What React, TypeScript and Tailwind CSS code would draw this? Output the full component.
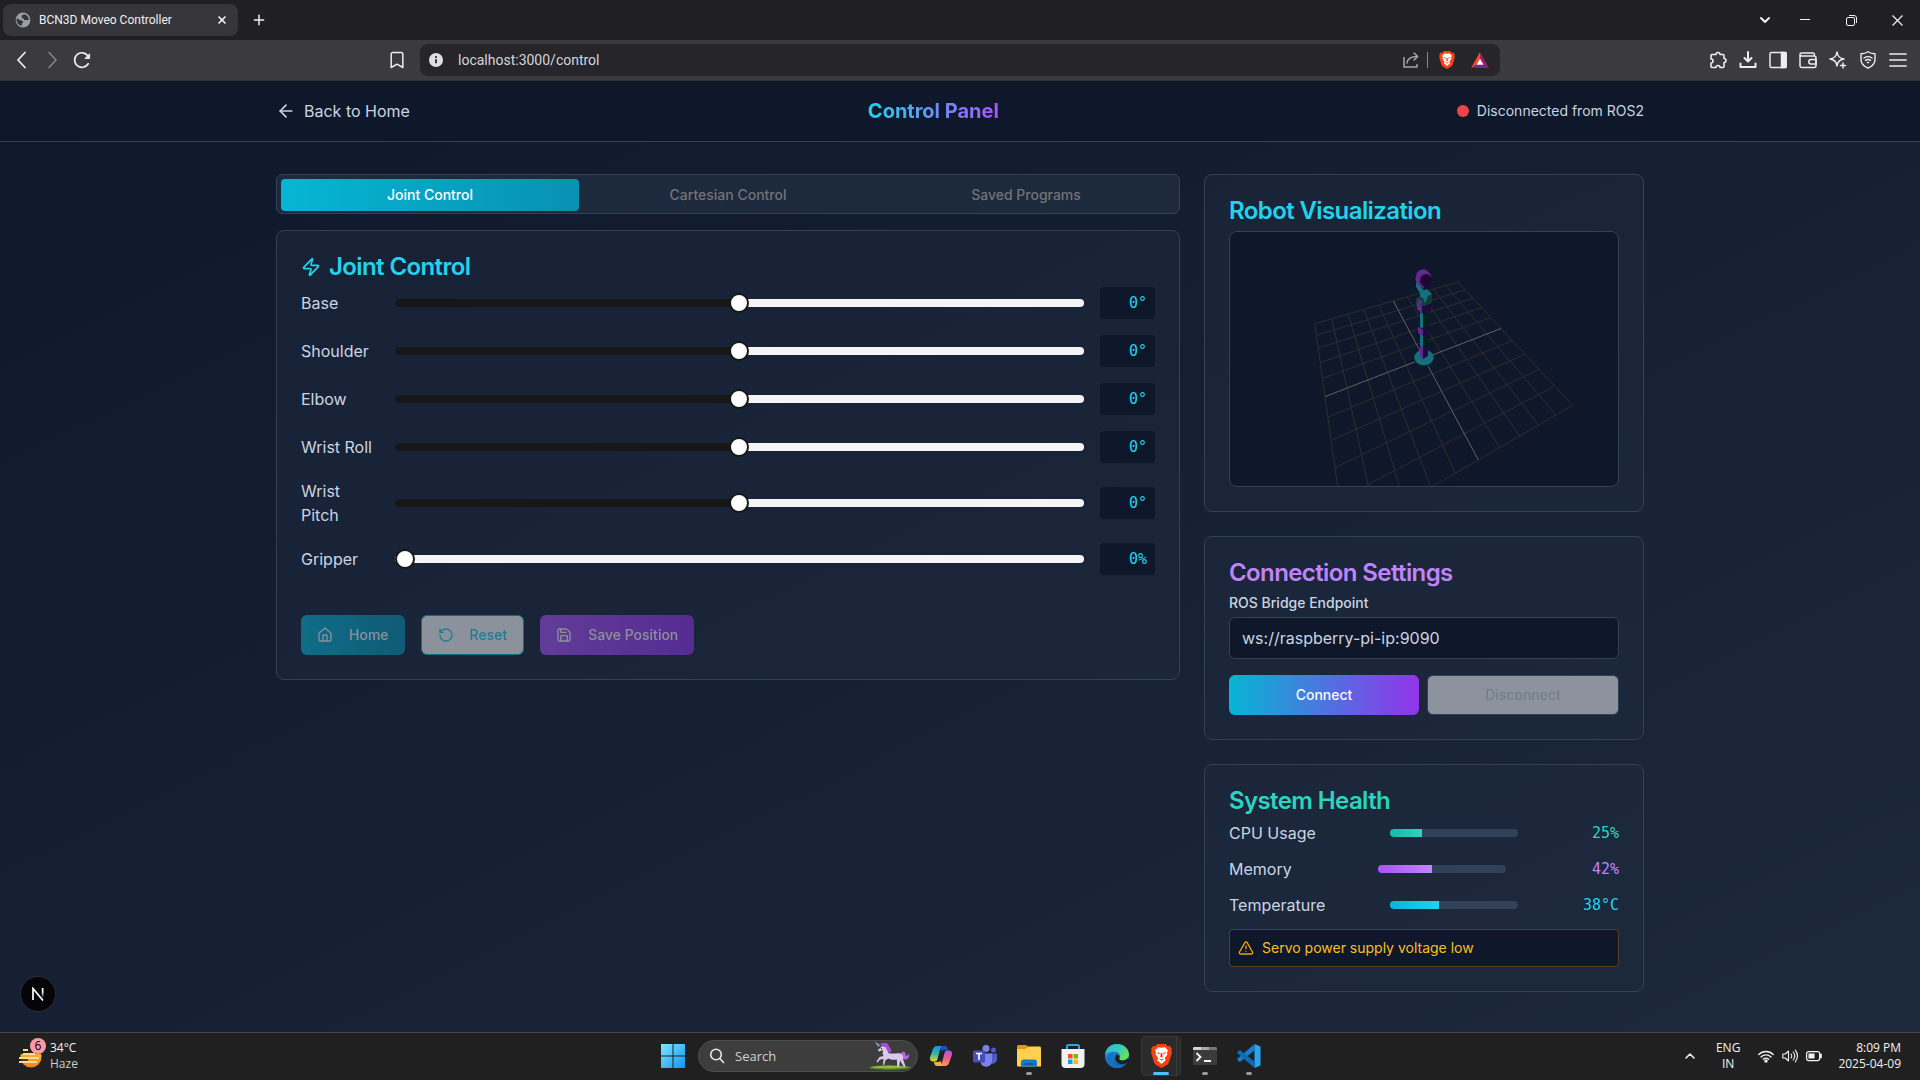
import { useState } from "react";
import type { CSSProperties, ReactNode } from "react";
import {
  ArrowLeft,
  Bookmark,
  ChevronDown,
  ChevronUp,
  House,
  Plus,
  RotateCcw,
  Save,
  TriangleAlert,
  X,
  Zap,
} from "lucide-react";

/* ---------- Browser chrome ---------- */

function Globe() {
  return (
    <svg viewBox="0 0 16 16" className="size-4 shrink-0">
      <circle cx="8" cy="8" r="7.4" fill="#9aa0a6" />
      <path
        d="M2 6.2C3.5 6.6 4 8 5.4 8c1.2 0 1.4 1 2.4 1.2.9.2.4 1.6-.5 1.9-.8.3-.6 1.5.1 2.6C4.300 13.600 1.400 11 1.600 8c0-.7.1-1.200.4-1.800zM7 3.200c1.300-.6 2.900-.9 4-.2 1.700 1.100 2.800 2.800 2.900 4.700-1 .9-1.800 0-2.900.4-1 .4-2 0-2-.9s-1.500-.5-2-1.300c-.4-.8-.6-2.300 0-2.700z"
        fill="#35353a"
      />
    </svg>
  );
}

function BraveLion({ className }: { className: string }) {
  return (
    <svg viewBox="0 0 20 23" className={className}>
      <path
        d="M6 0h8l2 2.200 2-.4 2 2.700-.6 1.700.6 1.900-2.800 9.400c-.3 1-1 1.800-1.800 2.300L10 23l-5.400-3.200c-.8-.5-1.500-1.300-1.800-2.300L0 8.100l.6-1.900L0 4.500l2-2.700 2 .4z"
        fill="#fb4014"
      />
      <path
        d="M10 3.600l3.200-.6 3 3.100-1 2.300.6 1.300-2.700 3.900.9 2-4 3.600-4-3.600.9-2-2.700-3.900.6-1.300-1-2.300 3-3.100z"
        fill="#fff"
      />
      <path
        d="M5.400 7.700l3 .9-.7 1.500zM14.600 7.700l-3 .9.7 1.500zM9.300 8.500h1.400l.5 3.600L10 13l-1.200-.9zM7.400 13.400l2.600 1.400 2.600-1.400-2.600 3z"
        fill="#fb4014"
      />
    </svg>
  );
}

function WindowButton({ label, children }: { label: string; children: ReactNode }) {
  return (
    <button type="button" aria-label={label} className="flex h-10 w-[46px] items-center justify-center">
      {children}
    </button>
  );
}

function TabStrip() {
  return (
    <div className="flex h-10 items-center bg-[#202024] pl-[3px] text-[#f0f0f2]">
      <div className="flex h-8 w-[235px] items-center rounded-lg bg-[#35353a] pl-3 pr-2">
        <Globe />
        <span className="ml-2 flex-1 whitespace-nowrap font-['Roboto','Open_Sans',sans-serif] text-xs">
          BCN3D Moveo Controller
        </span>
        <button type="button" aria-label="Close tab" className="flex size-4 items-center justify-center">
          <X className="size-3" strokeWidth={3.4} />
        </button>
      </div>
      <button type="button" aria-label="New tab" className="ml-3 flex size-[18px] items-center justify-center">
        <Plus className="size-4" strokeWidth={2.2} />
      </button>
      <div className="ml-auto flex">
        <button type="button" aria-label="Search tabs" className="mr-px flex h-10 w-8 items-center justify-center">
          <ChevronDown className="size-4" strokeWidth={3} />
        </button>
        <WindowButton label="Minimise">
          <svg viewBox="0 0 10 10" className="size-[10px]" stroke="currentColor">
            <path d="M0 4.500h10" />
          </svg>
        </WindowButton>
        <WindowButton label="Restore">
          <svg viewBox="0 0 11 11" className="size-[11px]" stroke="currentColor" fill="none">
            <rect x="0.500" y="2.500" width="8" height="8" rx="1.500" />
            <path d="M3 .5h5a2.500 2.500 0 012.500 2.500v5" />
          </svg>
        </WindowButton>
        <WindowButton label="Close">
          <svg viewBox="0 0 11 11" className="size-[11px]" stroke="currentColor" strokeWidth="1.200">
            <path d="M.5.5l10 10M10.500.5l-10 10" />
          </svg>
        </WindowButton>
      </div>
    </div>
  );
}

function ToolButton({ label, children }: { label: string; children: ReactNode }) {
  return (
    <button type="button" aria-label={label} className="flex h-8 w-[30px] items-center justify-center">
      {children}
    </button>
  );
}

const stroke18 = {
  viewBox: "0 0 18 18",
  className: "size-[18px]",
  fill: "none",
  stroke: "currentColor",
  strokeWidth: 1.5,
  strokeLinecap: "round" as const,
  strokeLinejoin: "round" as const,
};

function Toolbar() {
  return (
    <div className="grid h-[41px] grid-cols-[420fr_1080fr_420fr] items-center border-b border-[#2f2f34] bg-[#3b3b3f] text-[#ededf0]">
      <div className="flex items-center pl-[7px] pr-2">
        <ToolButton label="Back">
          <svg {...stroke18} strokeWidth={1.8}>
            <path d="M12 1.500L5 9l7 7.500" />
          </svg>
        </ToolButton>
        <ToolButton label="Forward">
          <svg {...stroke18} stroke="#86868b">
            <path d="M6 1.500L13 9l-7 7.500" />
          </svg>
        </ToolButton>
        <ToolButton label="Reload">
          <svg {...stroke18} strokeWidth={1.700}>
            <path d="M15.200 12.800A7.300 7.300 0 1115 5" />
            <path d="M16.600 3.200v4.200h-4.200z" fill="currentColor" strokeWidth={1} />
          </svg>
        </ToolButton>
        <button type="button" aria-label="Bookmark this page" className="ml-auto flex h-8 w-[30px] items-center justify-center">
          <Bookmark className="size-5" strokeWidth={1.8} />
        </button>
      </div>
      <div className="flex h-8 items-center rounded-lg bg-[#25252a] pl-[9px] pr-[9px]">
        <svg viewBox="0 0 14 14" className="size-[14px] shrink-0">
          <circle cx="7" cy="7" r="7" fill="#dedee3" />
          <path d="M7 6.200v4" stroke="#25252a" strokeWidth="1.800" />
          <circle cx="7" cy="4" r="1.100" fill="#25252a" />
        </svg>
        <input
          aria-label="Address"
          defaultValue="localhost:3000/control"
          className="ml-[15px] min-w-0 flex-1 bg-transparent font-['Roboto','Open_Sans',sans-serif] text-sm text-[#d5d5da] outline-none"
        />
        <button type="button" aria-label="Share" className="text-[#a5a5aa]">
          <svg {...stroke18}>
            <path d="M2 6.500v9.500h13v-2.500" />
            <path d="M5 12c.5-4.500 3.500-6.500 10.500-6.500M12 2l3.700 3.500L12 9" />
          </svg>
        </button>
        <span className="mx-[7px] h-4 w-px bg-[#8a8a8f]" />
        <button type="button" aria-label="Brave Shields" className="ml-1">
          <BraveLion className="h-[18px] w-4" />
        </button>
        <button type="button" aria-label="Brave Rewards" className="ml-4 mr-[2px]">
          <svg viewBox="0 0 18 16" className="h-4 w-[18px]">
            <path d="M9 0L0 16l5.500-3.200L9 6.500z" fill="#ff4724" />
            <path d="M9 0l9 16-5.500-3.200L9 6.500z" fill="#9e1f63" />
            <path d="M0 16h18l-5.500-3.200h-7z" fill="#662d91" />
            <path d="M9 6.500l3.500 6.300h-7z" fill="#fff" />
          </svg>
        </button>
      </div>
      <div className="flex items-center justify-end pr-[7px]">
        <ToolButton label="Extensions">
          <svg {...stroke18} strokeWidth={1.600}>
            <path d="M7 3.500a2 2 0 014 0h3a1 1 0 011 1v3a2 2 0 010 4V15.500a1 1 0 01-1 1h-3a2 2 0 00-4 0H3a1 1 0 01-1-1v-3.500a2 2 0 000-4V4.500a1 1 0 011-1z" />
          </svg>
        </ToolButton>
        <ToolButton label="Downloads">
          <svg {...stroke18} strokeWidth={2}>
            <path d="M9 1v9M5.500 7L9 10.500 12.500 7M1.500 12.500V16h15v-3.500" />
          </svg>
        </ToolButton>
        <ToolButton label="Sidebar">
          <svg {...stroke18}>
            <rect x="1" y="1.500" width="16" height="15" rx="1.500" />
            <path d="M12.500 1.500H17v15h-4.500z" fill="currentColor" />
          </svg>
        </ToolButton>
        <ToolButton label="Wallet">
          <svg {...stroke18}>
            <path d="M1 4v10.500a2 2 0 002 2h12a2 2 0 002-2V7a2 2 0 00-2-2H2.500a1.500 1.500 0 010-3H14a1.500 1.500 0 011.500 1.500V5" />
            <path d="M17 8.500h-5a2 2 0 000 4.500h5z" />
          </svg>
        </ToolButton>
        <ToolButton label="Leo AI">
          <svg {...stroke18}>
            <path d="M8 1c.6 4.500 2.500 6.400 7 7-4.500.6-6.400 2.500-7 7-.6-4.500-2.500-6.400-7-7 4.500-.6 6.400-2.500 7-7zM14 12v5M11.500 14.500h5" />
          </svg>
        </ToolButton>
        <ToolButton label="VPN">
          <svg {...stroke18} strokeWidth={1.400}>
            <path d="M9 .8c2 1.400 4.500 2 7 2v6c0 4-3.500 6.800-7 8.400-3.500-1.600-7-4.400-7-8.400v-6c2.500 0 5-.6 7-2z" />
            <path d="M5 7c2.500-1.700 5.500-1.700 8 0M6.500 9.300c1.500-1 3.500-1 5 0M8.400 11.500h1.200" />
          </svg>
        </ToolButton>
        <ToolButton label="Menu">
          <svg {...stroke18} strokeWidth={1.700}>
            <path d="M1 3h16M1 9h16M1 15h16" />
          </svg>
        </ToolButton>
      </div>
    </div>
  );
}

/* ---------- Control page ---------- */

function Header() {
  return (
    <header className="border-b border-slate-700 bg-slate-900">
      <div className="mx-auto flex max-w-[1400px] items-center justify-between px-4 py-4">
        <a href="#home" className="flex items-center gap-2 text-slate-300">
          <ArrowLeft className="size-5" />
          Back to Home
        </a>
        <h1 className="bg-linear-to-r/srgb from-[#22d3ee] to-[#a855f7] bg-clip-text text-xl font-bold text-transparent">
          Control Panel
        </h1>
        <div className="flex items-center gap-2 text-sm text-slate-300">
          <span className="size-3 rounded-full bg-[#ef4444]" />
          Disconnected from ROS2
        </div>
      </div>
    </header>
  );
}

function Panel({ children }: { children: ReactNode }) {
  return <section className="rounded-lg border border-slate-700 bg-slate-800/50 p-6">{children}</section>;
}

type Joint = { id: string; label: string; min: number; max: number; unit: string };

const JOINTS: Joint[] = [
  { id: "base", label: "Base", min: -180, max: 180, unit: "°" },
  { id: "shoulder", label: "Shoulder", min: -90, max: 90, unit: "°" },
  { id: "elbow", label: "Elbow", min: -90, max: 90, unit: "°" },
  { id: "wrist-roll", label: "Wrist Roll", min: -180, max: 180, unit: "°" },
  { id: "wrist-pitch", label: "Wrist Pitch", min: -90, max: 90, unit: "°" },
  { id: "gripper", label: "Gripper", min: 0, max: 100, unit: "%" },
];

function JointRow({ joint }: { joint: Joint }) {
  const [value, setValue] = useState(0);
  const percent = ((value - joint.min) / (joint.max - joint.min)) * 100;
  const fill: CSSProperties = {
    backgroundImage: `linear-gradient(to right, #171717 ${percent}%, #f5f5f5 ${percent}%)`,
  };
  return (
    <div className="flex items-center gap-4">
      <label htmlFor={joint.id} className="w-24 text-slate-300">
        {joint.label}
      </label>
      <input
        id={joint.id}
        type="range"
        min={joint.min}
        max={joint.max}
        value={value}
        onChange={(e) => setValue(Number(e.target.value))}
        style={fill}
        className="h-2 w-full appearance-none rounded-full [&::-webkit-slider-thumb]:size-5 [&::-webkit-slider-thumb]:appearance-none [&::-webkit-slider-thumb]:rounded-full [&::-webkit-slider-thumb]:border-2 [&::-webkit-slider-thumb]:border-neutral-900 [&::-webkit-slider-thumb]:bg-white"
      />
      <output
        htmlFor={joint.id}
        className="w-16 rounded bg-slate-900 px-2 py-1 text-right font-['DejaVu_Sans_Mono',monospace] text-[15px]/6 text-[#22d3ee]"
      >
        {value}
        {joint.unit}
      </output>
    </div>
  );
}

const TABS = ["Joint Control", "Cartesian Control", "Saved Programs"];

function JointControl() {
  return (
    <div className="lg:col-span-2">
      <div role="tablist" className="grid h-10 grid-cols-3 rounded-md border border-slate-700 bg-slate-800 p-1">
        {TABS.map((tab, i) => (
          <button
            key={tab}
            type="button"
            role="tab"
            aria-selected={i === 0}
            className="h-8 rounded-sm text-sm font-medium text-neutral-500 aria-selected:bg-linear-to-r/srgb aria-selected:from-[#06b6d4] aria-selected:to-[#0891b2] aria-selected:text-white"
          >
            {tab}
          </button>
        ))}
      </div>
      <div className="mt-4">
        <Panel>
          <h2 className="mb-2 flex items-center gap-2 text-2xl/6 font-semibold tracking-tight text-[#22d3ee]">
            <Zap className="size-5" />
            Joint Control
          </h2>
          <div className="flex flex-col gap-4">
            {JOINTS.map((joint) => (
              <JointRow key={joint.id} joint={joint} />
            ))}
          </div>
          <div className="mt-10 flex gap-4 text-sm font-medium">
            <button
              type="button"
              disabled
              className="flex h-10 items-center gap-4 rounded-md bg-linear-to-r/srgb from-[#06b6d4] to-[#0891b2] px-4 text-neutral-50 opacity-50"
            >
              <House className="size-4" />
              Home
            </button>
            <button
              type="button"
              disabled
              className="flex h-10 items-center gap-4 rounded-md border border-[#06b6d4] bg-white px-4 text-[#22d3ee] opacity-50"
            >
              <RotateCcw className="size-4" />
              Reset
            </button>
            <button
              type="button"
              disabled
              className="flex h-10 items-center gap-4 rounded-md bg-linear-to-r/srgb from-[#a855f7] to-[#9333ea] px-4 text-neutral-50 opacity-50"
            >
              <Save className="size-4" />
              Save Position
            </button>
          </div>
        </Panel>
      </div>
    </div>
  );
}

/* Projects a floor point (u, v in -1..1) onto the viewport. */
function project(u: number, v: number): string {
  const w = 0.125 * u - 0.2776 * v + 1;
  const x = (110.9 * u - 14.6 * v + 194) / w;
  const y = (-17.7 * u + 38.3 * v + 126.3) / w;
  return `${x.toFixed(1)} ${y.toFixed(1)}`;
}

function floorLines(steps: number[]): string {
  return steps
    .map((t) => `M${project(t, -1)}L${project(t, 1)}M${project(-1, t)}L${project(1, t)}`)
    .join("");
}

const OUTER_STEPS = [-1, -0.8, -0.6, -0.4, -0.2, 0.2, 0.4, 0.6, 0.8, 1];

function RobotScene() {
  return (
    <svg
      viewBox="0 0 388 254"
      className="h-full w-full"
      preserveAspectRatio="xMidYMid slice"
      role="img"
      aria-label="Robot arm on a grid floor"
    >
      <path d={floorLines(OUTER_STEPS)} stroke="#302d2b" fill="none" />
      <path d={floorLines([0])} stroke="#626264" fill="none" />
      <ellipse cx="194" cy="127" rx="9.700" ry="7.800" fill="#04262a" />
      <ellipse cx="194" cy="125.500" rx="9.700" ry="7.800" fill="#156f7c" />
      <path d="M190 101l4 2v13l-4-2z" fill="#156f7c" />
      <path d="M193 102l5-1.500v14l-5 2z" fill="#03201f" />
      <path d="M190 113l4 2v12l-4-2.500z" fill="#5d2a8c" />
      <path d="M193 115.500l5-1.500v10l-5 3z" fill="#220840" />
      <path d="M190 80l4 2v15l-4-2z" fill="#156f7c" />
      <path d="M193 80l6-1.500V97l-6 2z" fill="#03201f" />
      <path d="M188 94.500l5 3.500v6l-5-3z" fill="#5d2a8c" />
      <path d="M193 98l7-2v6l-7 2.500z" fill="#220840" />
      <path d="M186 66l8-2 7 2v8h-15z" fill="#0d403b" />
      <path d="M187 70l5 4v7l-5-3.500z" fill="#5d2a8c" />
      <path d="M192 74.500l9-3v7l-9 2.500z" fill="#220840" />
      <path d="M188 67l4 2v4l-4-2z" fill="#5d2a8c" />
      <path d="M186 50l4 3 4 6-3 4-5-8z" fill="#156f7c" />
      <path d="M190 60l7-3 5 5-3 5-2 0-2 4-2-5-3-1z" fill="#156f7c" />
      <path d="M198 64l4-2v9l-4 1-2-3z" fill="#0a3d38" />
      <path d="M186 44.500a7 7 0 0112-5l3.500 4.500-8 12-6-4a8 8 0 01-1.500-7.500z" fill="#5f2b90" />
      <ellipse cx="196" cy="48.500" rx="6" ry="6.500" fill="#1f0633" />
    </svg>
  );
}

const METRICS = [
  {
    label: "CPU Usage",
    percent: 25,
    text: "25%",
    tone: "text-[#2dd4bf]",
    bar: "bg-linear-to-r/srgb from-[#14b8a6] to-[#2dd4bf]",
  },
  {
    label: "Memory",
    percent: 42,
    text: "42%",
    tone: "text-[#c084fc]",
    bar: "bg-linear-to-r/srgb from-[#a855f7] to-[#c084fc]",
  },
  {
    label: "Temperature",
    percent: 38,
    text: "38°C",
    tone: "text-[#22d3ee]",
    bar: "bg-linear-to-r/srgb from-[#06b6d4] to-[#22d3ee]",
  },
];

function Sidebar() {
  return (
    <div className="flex flex-col gap-6">
      <Panel>
        <h2 className="mb-2 text-2xl/6 font-semibold tracking-tight text-[#22d3ee]">Robot Visualization</h2>
        <div className="h-64 overflow-hidden rounded-lg border border-slate-700 bg-slate-900">
          <RobotScene />
        </div>
      </Panel>
      <Panel>
        <h2 className="mb-2 text-2xl/6 font-semibold tracking-tight text-[#c084fc]">Connection Settings</h2>
        <label htmlFor="endpoint" className="mb-1 block text-sm font-medium text-slate-300">
          ROS Bridge Endpoint
        </label>
        <input
          id="endpoint"
          type="text"
          defaultValue="ws://raspberry-pi-ip:9090"
          className="w-full rounded-md border border-slate-700 bg-slate-900 px-3 py-2 text-slate-300 outline-none"
        />
        <div className="mt-4 flex gap-2 text-sm font-medium">
          <button
            type="button"
            className="h-10 flex-1 rounded-md bg-linear-to-r/srgb from-[#06b6d4] to-[#9333ea] text-neutral-50"
          >
            Connect
          </button>
          <button
            type="button"
            disabled
            className="h-10 flex-1 rounded-md border border-slate-600 bg-white text-slate-300 opacity-50"
          >
            Disconnect
          </button>
        </div>
      </Panel>
      <Panel>
        <h2 className="mb-2 text-2xl/6 font-semibold tracking-tight text-[#2dd4bf]">System Health</h2>
        <div className="flex flex-col gap-3">
          {METRICS.map((m) => (
            <div key={m.label} className="flex items-center justify-between">
              <span className="text-slate-300">{m.label}</span>
              <div
                role="progressbar"
                aria-label={m.label}
                aria-valuenow={m.percent}
                className="h-2 w-32 overflow-hidden rounded-full bg-slate-700"
              >
                <div className={`h-full ${m.bar}`} style={{ width: `${m.percent}%` }} />
              </div>
              <span className={`font-['DejaVu_Sans_Mono',monospace] text-[15px]/6 ${m.tone}`}>{m.text}</span>
            </div>
          ))}
          <div
            role="alert"
            className="flex items-center gap-2 rounded border border-[#f59e0b]/30 bg-slate-900 p-2 text-sm text-[#fbbf24]"
          >
            <TriangleAlert className="size-4 text-[#f59e0b]" />
            Servo power supply voltage low
          </div>
        </div>
      </Panel>
    </div>
  );
}

function DevBadge() {
  return (
    <button
      type="button"
      aria-label="Open Next.js developer tools"
      className="absolute bottom-5 left-5 flex size-9 items-center justify-center rounded-full border border-[#2c2c30] bg-[#050507]"
    >
      <svg viewBox="0 0 14 14" className="size-[14px]" fill="none" strokeWidth="1.700">
        <defs>
          <linearGradient id="stem" x1="0" y1="0" x2="0" y2="1">
            <stop offset="0.400" stopColor="#fff" />
            <stop offset="1" stopColor="#fff" stopOpacity="0" />
          </linearGradient>
        </defs>
        <path d="M2 13V1.500L12 13.500" stroke="#fff" />
        <rect x="10.800" y="1" width="1.700" height="10" fill="url(#stem)" />
      </svg>
    </button>
  );
}

/* ---------- Windows taskbar ---------- */

function TaskIcon({
  label,
  state = "closed",
  children,
}: {
  label: string;
  state?: "closed" | "open" | "active";
  children: ReactNode;
}) {
  return (
    <button
      type="button"
      aria-label={label}
      data-state={state}
      className="relative mx-[2px] flex h-10 w-10 items-center justify-center rounded data-[state=active]:border data-[state=active]:border-[#343434] data-[state=active]:bg-[#2b2b2b]"
    >
      {children}
      {state === "open" && <span className="absolute bottom-px h-[3px] w-[6px] rounded-full bg-[#9a9a9a]" />}
      {state === "active" && (
        <>
          <span className="absolute inset-y-0 right-[3px] w-px bg-[#3c3c3c]" />
          <span className="absolute bottom-0 h-[3px] w-4 rounded-full bg-[#4cc2ff]" />
        </>
      )}
    </button>
  );
}

function Unicorn() {
  return (
    <svg viewBox="0 0 42 32" className="h-8 w-[42px]">
      <ellipse cx="21" cy="27.500" rx="20.500" ry="2.200" fill="#5f8f2c" />
      <ellipse cx="20" cy="27" rx="17" ry="1.200" fill="#8fbf3a" />
      <path d="M33 12c3-1 4 1.500 3.500 3.500 1 .8 2.500 0 3.500-2 .6 4-1.500 6.500-4.500 6-2.500-.5-3-3-4.500-3.500z" fill="#b565e0" />
      <path
        d="M9 10l4-4 4 1 2.500 6c4 1.500 8.500-.5 12 .5 2.500 1 3 3.500 2.500 5.500l2.500 7.500-1.500.5-4-6.500-1 6.500h-1.700l-.5-7.500c-3 .5-6 .3-8.500-1l-3 2-1 4.500-1.300-.5.5-5.500-3.500.5-2.500 3-1-1 3-4.500 4-1c-1-2-1-3.500-.5-6l-4.500 1.500z"
        fill="#dcc8ec"
      />
      <path d="M11 5c2-3 8-3 9 1 1 3 3 2.500 2 6-1 1-3 0-4-2s-1-3.500-4-4z" fill="#a14fd6" />
      <path d="M9.500 7L5.500 1.500 11 5z" fill="#6fb3e8" />
      <circle cx="12.500" cy="8.500" r=".7" fill="#3a2150" />
    </svg>
  );
}

function Taskbar() {
  return (
    <footer className="grid h-12 grid-cols-[1fr_auto_1fr] items-center border-t border-[#454545] bg-[#202020] pb-px font-['Open_Sans',sans-serif] text-xs/4 text-[#f2f2f2]">
      <button type="button" className="flex items-center gap-2 justify-self-start pl-[18px] text-left">
        <span className="relative block h-8 w-6">
          <svg viewBox="0 0 24 24" className="mt-1 size-6">
            <defs>
              <linearGradient id="sun" x1="0" y1="0" x2="0" y2="1">
                <stop offset="0" stopColor="#ffc93c" />
                <stop offset="1" stopColor="#f0821a" />
              </linearGradient>
              <clipPath id="lowSun">
                <path d="M0 10h24v14H0z" />
              </clipPath>
            </defs>
            <circle cx="13" cy="13" r="10.500" fill="url(#sun)" clipPath="url(#lowSun)" />
            <path d="M5 6h5M5 10h12M1 14h20M1 18h18" stroke="#f3dd94" strokeWidth="1.800" />
            <path d="M0 16h10M0 20h4" stroke="#202020" strokeWidth="1.400" />
          </svg>
          <span className="absolute -top-[2px] left-3 flex size-4 items-center justify-center rounded-full bg-[#ff99a4] text-black">
            6
          </span>
        </span>
        <span>
          <span className="block">34°C</span>
          <span className="block text-[#cfcfcf]">Haze</span>
        </span>
      </button>

      <div className="flex items-center pl-[2px]">
        <TaskIcon label="Start">
          <svg viewBox="0 0 24 24" className="size-6">
            <defs>
              <linearGradient id="win" x1="0" y1="0" x2="1" y2="1">
                <stop offset="0" stopColor="#7fe6ff" />
                <stop offset="1" stopColor="#1094f0" />
              </linearGradient>
            </defs>
            <path d="M0 0h11.500v11.500H0zM12.500 0H24v11.500H12.500zM0 12.500h11.500V24H0zM12.500 12.500H24V24H12.500z" fill="url(#win)" />
          </svg>
        </TaskIcon>
        <label className="ml-[3px] mr-px flex h-8 w-[220px] items-center rounded-full border border-[#4e4e4e] bg-[#3d3d3d] pl-[10px] pr-[6px]">
          <svg viewBox="0 0 16 16" className="size-4 shrink-0" fill="none" stroke="#e6e6e6" strokeWidth="1.600">
            <circle cx="7" cy="6.500" r="5.300" />
            <path d="M10.800 10.500L15 15" />
          </svg>
          <input
            aria-label="Search"
            placeholder="Search"
            className="ml-[10px] w-20 min-w-0 flex-1 bg-transparent text-[13px] outline-none placeholder:text-[#d0d0d0]"
          />
          <Unicorn />
        </label>
        <TaskIcon label="Copilot">
          <svg viewBox="0 0 24 24" className="size-6">
            <defs>
              <linearGradient id="cpA" x1="0" y1="0" x2="0" y2="1">
                <stop offset="0" stopColor="#1a8fe6" />
                <stop offset="0.500" stopColor="#2fb8a0" />
                <stop offset="1" stopColor="#f2d021" />
              </linearGradient>
              <linearGradient id="cpB" x1="0" y1="0" x2="0" y2="1">
                <stop offset="0" stopColor="#a35cf0" />
                <stop offset="0.500" stopColor="#ee5a8c" />
                <stop offset="1" stopColor="#ff9a4d" />
              </linearGradient>
            </defs>
            <path d="M16 2c2 0 2.500 1.500 3 4h-4c-1 0-1.700.5-2 1.500L10 2z" fill="#1b4fc4" />
            <path d="M8 2h5.500c-1.500.5-2 1.500-2.500 3.500L8.500 15c-.5 1.700-1 2.500-2.500 2.500H4.500c-3 0-4-2-3.300-5L4 5c.7-2 2-3 4-3z" fill="url(#cpA)" />
            <path d="M8 22c-2 0-2.500-1.500-3-4h4c1 0 1.700-.5 2-1.500L14 22z" fill="#f5b04a" />
            <path d="M16 22h-5.500c1.500-.5 2-1.500 2.500-3.500L15.500 9c.5-1.700 1-2.500 2.500-2.500h1.500c3 0 4 2 3.300 5L20 19c-.7 2-2 3-4 3z" fill="url(#cpB)" />
          </svg>
        </TaskIcon>
        <TaskIcon label="Microsoft Teams">
          <svg viewBox="0 0 24 24" className="size-6">
            <circle cx="20.500" cy="6" r="2.500" fill="#5059c9" />
            <circle cx="13" cy="4.500" r="3.500" fill="#7b83eb" />
            <path d="M17 9.500h7v6a4.500 4.500 0 01-7 3.500z" fill="#5059c9" />
            <path d="M8 9.500h11v7a6 6 0 01-11 3.500z" fill="#7b83eb" />
            <rect x="0" y="6.500" width="12" height="12" rx="1.200" fill="#464eb8" />
            <path d="M3 9.500h6M6 9.500v6.500" stroke="#fff" strokeWidth="1.600" />
          </svg>
        </TaskIcon>
        <TaskIcon label="File Explorer" state="open">
          <svg viewBox="0 0 24 22" className="h-[22px] w-6">
            <path d="M0 1.500C0 .7.7 0 1.500 0H9l2 1.500L9 4H0z" fill="#e09a12" />
            <path d="M0 4h8.500L11 1.500h11.500c.8 0 1.500.7 1.500 1.500v18.500H1A1 1 0 010 20.500z" fill="#ffd04f" />
            <path d="M4 21.500V17c0-1.500 1-2.500 2.500-2.500h11c1.500 0 2.500 1 2.500 2.500v4.500z" fill="#1579cc" />
            <path d="M7.500 18h9v2h-9z" fill="#0d5ba3" />
          </svg>
        </TaskIcon>
        <TaskIcon label="Microsoft Store">
          <svg viewBox="0 0 24 24" className="size-6">
            <path d="M6 6V2.500C6 1.700 6.700 1 7.500 1h9c.8 0 1.500.7 1.500 1.500V6" stroke="#2aa7e8" strokeWidth="2" fill="none" />
            <path d="M.5 5h23v15a4 4 0 01-4 4h-15a4 4 0 01-4-4z" fill="#f1f1f1" />
            <path d="M7 10h4.500v4.500H7z" fill="#f25022" />
            <path d="M12.500 10H17v4.500h-4.500z" fill="#7fba00" />
            <path d="M7 15.500h4.500V20H7z" fill="#00a4ef" />
            <path d="M12.500 15.500H17V20h-4.500z" fill="#ffb900" />
          </svg>
        </TaskIcon>
        <TaskIcon label="Microsoft Edge">
          <svg viewBox="0 0 24 24" className="size-6">
            <defs>
              <linearGradient id="edA" x1="0" y1="0" x2="1" y2="0.500">
                <stop offset="0" stopColor="#2cb4ea" />
                <stop offset="0.600" stopColor="#38cdb8" />
                <stop offset="1" stopColor="#66e05a" />
              </linearGradient>
              <linearGradient id="edB" x1="0" y1="0" x2="1" y2="1">
                <stop offset="0" stopColor="#1f9ae0" />
                <stop offset="1" stopColor="#0f4f9e" />
              </linearGradient>
            </defs>
            <circle cx="12" cy="12" r="12" fill="url(#edB)" />
            <path d="M0 11C.5 4.500 5.500 0 12 0c7 0 12 5 12 10.500 0 3.500-2.700 6-6.200 6-2.800 0-4.300-1.200-3.300-2.700 1.500-2.300-.5-6-4.800-6C5 7.800 1 9 0 11z" fill="url(#edA)" />
            <path d="M14.500 13.800c-1 1.500.5 2.700 3.300 2.700 2.200 0 4-.9 5-2.500l1.200 3.500-1.500 1c-2.500 1.800-6 2.200-8.500 1-4-1.800-5-6.500-2.500-9 2.500.3 3.700 1.900 3 3.300z" fill="#202020" />
            <path d="M9 9.500c-3 2.500-3 8 .5 11 3.500 2.500 9 1.700 12.500-2-2 3.500-5.500 5.500-10 5.500C5 24 1.500 18.500 1.500 14c1-3.500 4-5 7.500-4.500z" fill="#1a6fc0" />
          </svg>
        </TaskIcon>
        <TaskIcon label="Brave" state="active">
          <BraveLion className="h-6 w-[21px]" />
        </TaskIcon>
        <TaskIcon label="Terminal" state="open">
          <svg viewBox="0 0 24 18" className="h-[18px] w-6">
            <rect width="24" height="18" rx="1.500" fill="#3b3b3b" />
            <path d="M0 1.500C0 .7.700 0 1.500 0H8v3H0z" fill="#d6d6d6" />
            <path d="M8 0h8v3H8z" fill="#a8a8a8" />
            <path d="M16 0h6.500c.8 0 1.500.7 1.500 1.500V3h-8z" fill="#777" />
            <path d="M3.500 6l4 4-4 4M11 14h7" stroke="#f4f4f4" strokeWidth="1.900" fill="none" />
          </svg>
        </TaskIcon>
        <TaskIcon label="Visual Studio Code" state="open">
          <svg viewBox="0 0 24 24" className="size-6">
            <path d="M17.500 0l6 2.500v19l-6 2.500z" fill="#2aa3f0" />
            <path d="M17.500 0v6.500L3.500 17.500c-.5.400-1 .4-1.500 0L.7 16.300c-.7-.6-.7-1.300 0-1.900z" fill="#0f7fce" />
            <path d="M17.500 24v-6.500L3.500 6.500c-.5-.4-1-.4-1.500 0L.7 7.700c-.7.6-.7 1.300 0 1.900z" fill="#0a6cb8" />
          </svg>
        </TaskIcon>
      </div>

      <div className="flex items-center justify-self-end pr-[19px]">
        <button type="button" aria-label="Show hidden icons" className="mr-[18px]">
          <ChevronUp className="size-4" strokeWidth={2.400} />
        </button>
        <button type="button" className="mr-[18px] text-center">
          <span className="block">ENG</span>
          <span className="block">IN</span>
        </button>
        <button type="button" aria-label="Network, volume and battery" className="mr-4 flex items-center gap-2">
          <svg viewBox="0 0 16 16" className="size-4" fill="none" stroke="currentColor" strokeWidth="1.300" strokeLinecap="round">
            <path d="M.8 6.500c4-4 10.400-4 14.400 0M3 9c2.800-2.800 7.200-2.800 10 0M5.300 11.300c1.500-1.500 3.900-1.500 5.400 0" />
            <circle cx="8" cy="13" r="1.100" fill="currentColor" />
          </svg>
          <svg viewBox="0 0 16 16" className="size-4" fill="none" stroke="currentColor" strokeWidth="1.100" strokeLinecap="round" strokeLinejoin="round">
            <path d="M.8 6v4h2.400l3.300 3V3L3.200 6zM9 6c.9 1.200.9 2.800 0 4M11.200 4c1.900 2.400 1.900 5.600 0 8M13.300 2.200c2.600 3.500 2.600 8.100 0 11.600" />
          </svg>
          <svg viewBox="0 0 16 16" className="size-4" fill="none" stroke="currentColor" strokeWidth="1.200">
            <rect x="0.600" y="3.600" width="13" height="9" rx="2" />
            <path d="M2.500 5.500h6v5h-6z" fill="currentColor" stroke="none" />
            <path d="M14.900 6.500v3" strokeWidth="1.800" strokeLinecap="round" />
          </svg>
        </button>
        <button type="button" className="text-right">
          <span className="block">8:09 PM</span>
          <span className="block">2025-04-09</span>
        </button>
      </div>
    </footer>
  );
}

export default function App() {
  return (
    <div className="flex min-h-screen flex-col font-['Inter',sans-serif]">
      <TabStrip />
      <Toolbar />
      <div className="relative flex-1 bg-linear-to-br/srgb from-slate-900 to-slate-800">
        <Header />
        <main className="mx-auto grid max-w-[1400px] grid-cols-1 gap-6 px-4 pt-8 lg:grid-cols-3">
          <JointControl />
          <Sidebar />
        </main>
        <DevBadge />
      </div>
      <Taskbar />
    </div>
  );
}
